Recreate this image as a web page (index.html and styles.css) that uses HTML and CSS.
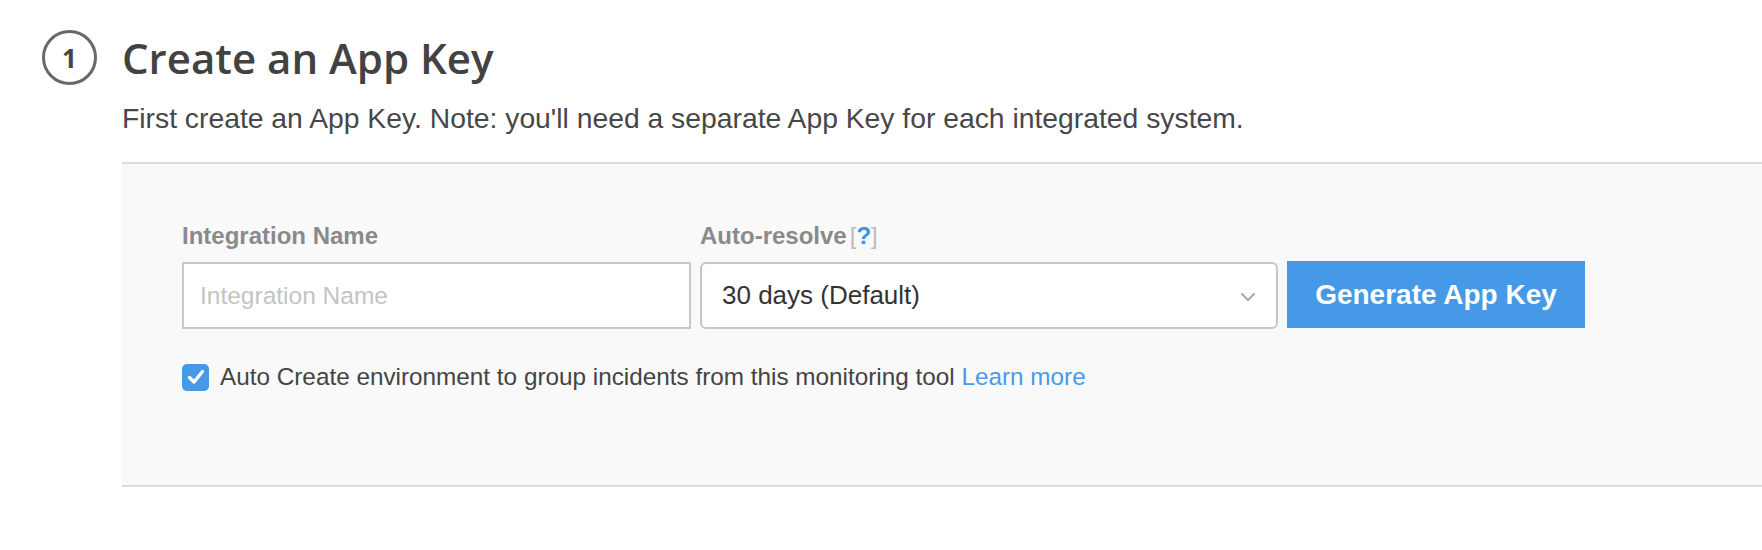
FILE: index.html
```html
<!DOCTYPE html>
<html lang="en">

<head>
    <meta charset="UTF-8">
    <meta name="viewport" content="width=device-width, initial-scale=1.0">
    <title>Create an App Key</title>
    <link rel="stylesheet" href="styles.css">
</head>

<body>
    <div class="step">
        <div class="step-num">1</div>
        <div class="step-body">
            <h2 class="step-title">Create an App Key</h2>
            <p class="step-desc">First create an App Key. Note: you'll need a separate App Key for each integrated system.</p>

            <div class="panel">
                <div class="form-row">
                    <div class="field field-name">
                        <label class="field-label" for="name">Integration Name</label>
                        <input id="name" class="text-input" type="text" placeholder="Integration Name">
                    </div>
                    <div class="field field-resolve">
                        <label class="field-label">Auto-resolve<span class="help">[<a href="#">?</a>]</span></label>
                        <div class="select">
                            <span>30 days (Default)</span>
                            <svg class="chevron" width="16" height="10" viewBox="0 0 16 10">
                                <path d="M1.5 1.5 L8 8 L14.5 1.5" fill="none" stroke="#a9a9a9" stroke-width="2"/>
                            </svg>
                        </div>
                    </div>
                    <button class="btn-primary">Generate App Key</button>
                </div>

                <label class="check">
                    <span class="check-box">
                        <svg width="18" height="16" viewBox="0 0 18 16">
                            <path d="M2.5 8.5 L7 13 L15.5 2.5" fill="none" stroke="#fff" stroke-width="3.4" stroke-linecap="round" stroke-linejoin="round"/>
                        </svg>
                    </span>
                    <span class="check-text">Auto Create environment to group incidents from this monitoring tool <a href="#">Learn more</a></span>
                </label>
            </div>
        </div>
    </div>
</body>

</html>
```

FILE: styles.css
```css
body * {
    box-sizing: border-box;
}

body {
    margin: 0;
    padding: 0;
    background: #fff;
    font-family: "Liberation Sans", Arial, sans-serif;
    color: #444;
}

a {
    color: #4a9ae8;
    text-decoration: none;
}

.step {
    display: grid;
    grid-template-columns: 122px 1fr;
    padding-top: 32px;
}

.step-num {
    width: 55px;
    height: 55px;
    margin: -2px 0 0 42px;
    border: 3px solid #686868;
    border-radius: 50%;
    display: flex;
    justify-content: center;
    align-items: center;
    font-family: "Open Sans", sans-serif;
    font-weight: 700;
    font-size: 26px;
    color: #454545;
}

.step-title {
    margin: 0;
    font-family: "Open Sans", sans-serif;
    font-weight: 600;
    font-size: 42px;
    line-height: 52px;
    color: #424242;
}

.step-desc {
    margin: 16px 0 0;
    font-size: 28.3px;
    line-height: 36px;
    color: #474747;
}

.panel {
    margin-top: 26px;
    background: #f9f9f9;
    border-top: 2px solid #dcdcdc;
    border-bottom: 2px solid #dcdcdc;
    padding: 58px 60px 94px;
}

.form-row {
    display: flex;
    align-items: flex-end;
    gap: 9px;
}

.field {
    display: flex;
    flex-direction: column;
}

.field-name {
    width: 509px;
}

.field-resolve {
    width: 578px;
}

.field-label {
    font-weight: bold;
    font-size: 24px;
    line-height: 28px;
    color: #8a8a8a;
    margin-bottom: 12px;
}

.help {
    color: #bcbcbc;
    font-weight: normal;
    margin-left: 3px;
}

.help a {
    font-weight: bold;
    color: #3f93e2;
}

.text-input {
    height: 67px;
    border: 2px solid #c9c9c9;
    background: #fff;
    padding: 0 16px;
    font-family: "Liberation Sans", Arial, sans-serif;
    font-size: 24.5px;
    color: #333;
    outline: none;
}

.text-input::placeholder {
    color: #c4c4c4;
}

.select {
    height: 67px;
    border: 2px solid #c6c6c6;
    border-radius: 6px;
    background: #fff;
    display: flex;
    align-items: center;
    justify-content: space-between;
    padding: 0 20px 0 20px;
    font-size: 26px;
    color: #333;
}

.chevron {
    margin-top: 2px;
}

.btn-primary {
    width: 298px;
    height: 67px;
    margin-bottom: 1px;
    border: none;
    background: #4599e6;
    color: #fff;
    font-family: "Liberation Sans", Arial, sans-serif;
    font-weight: bold;
    font-size: 28px;
    cursor: pointer;
}

.check {
    display: flex;
    align-items: center;
    gap: 11px;
    margin-top: 34px;
    font-size: 24.3px;
    color: #444;
}

.check-box {
    width: 27px;
    height: 27px;
    border-radius: 5px;
    background: #4599e6;
    display: flex;
    justify-content: center;
    align-items: center;
}
```
